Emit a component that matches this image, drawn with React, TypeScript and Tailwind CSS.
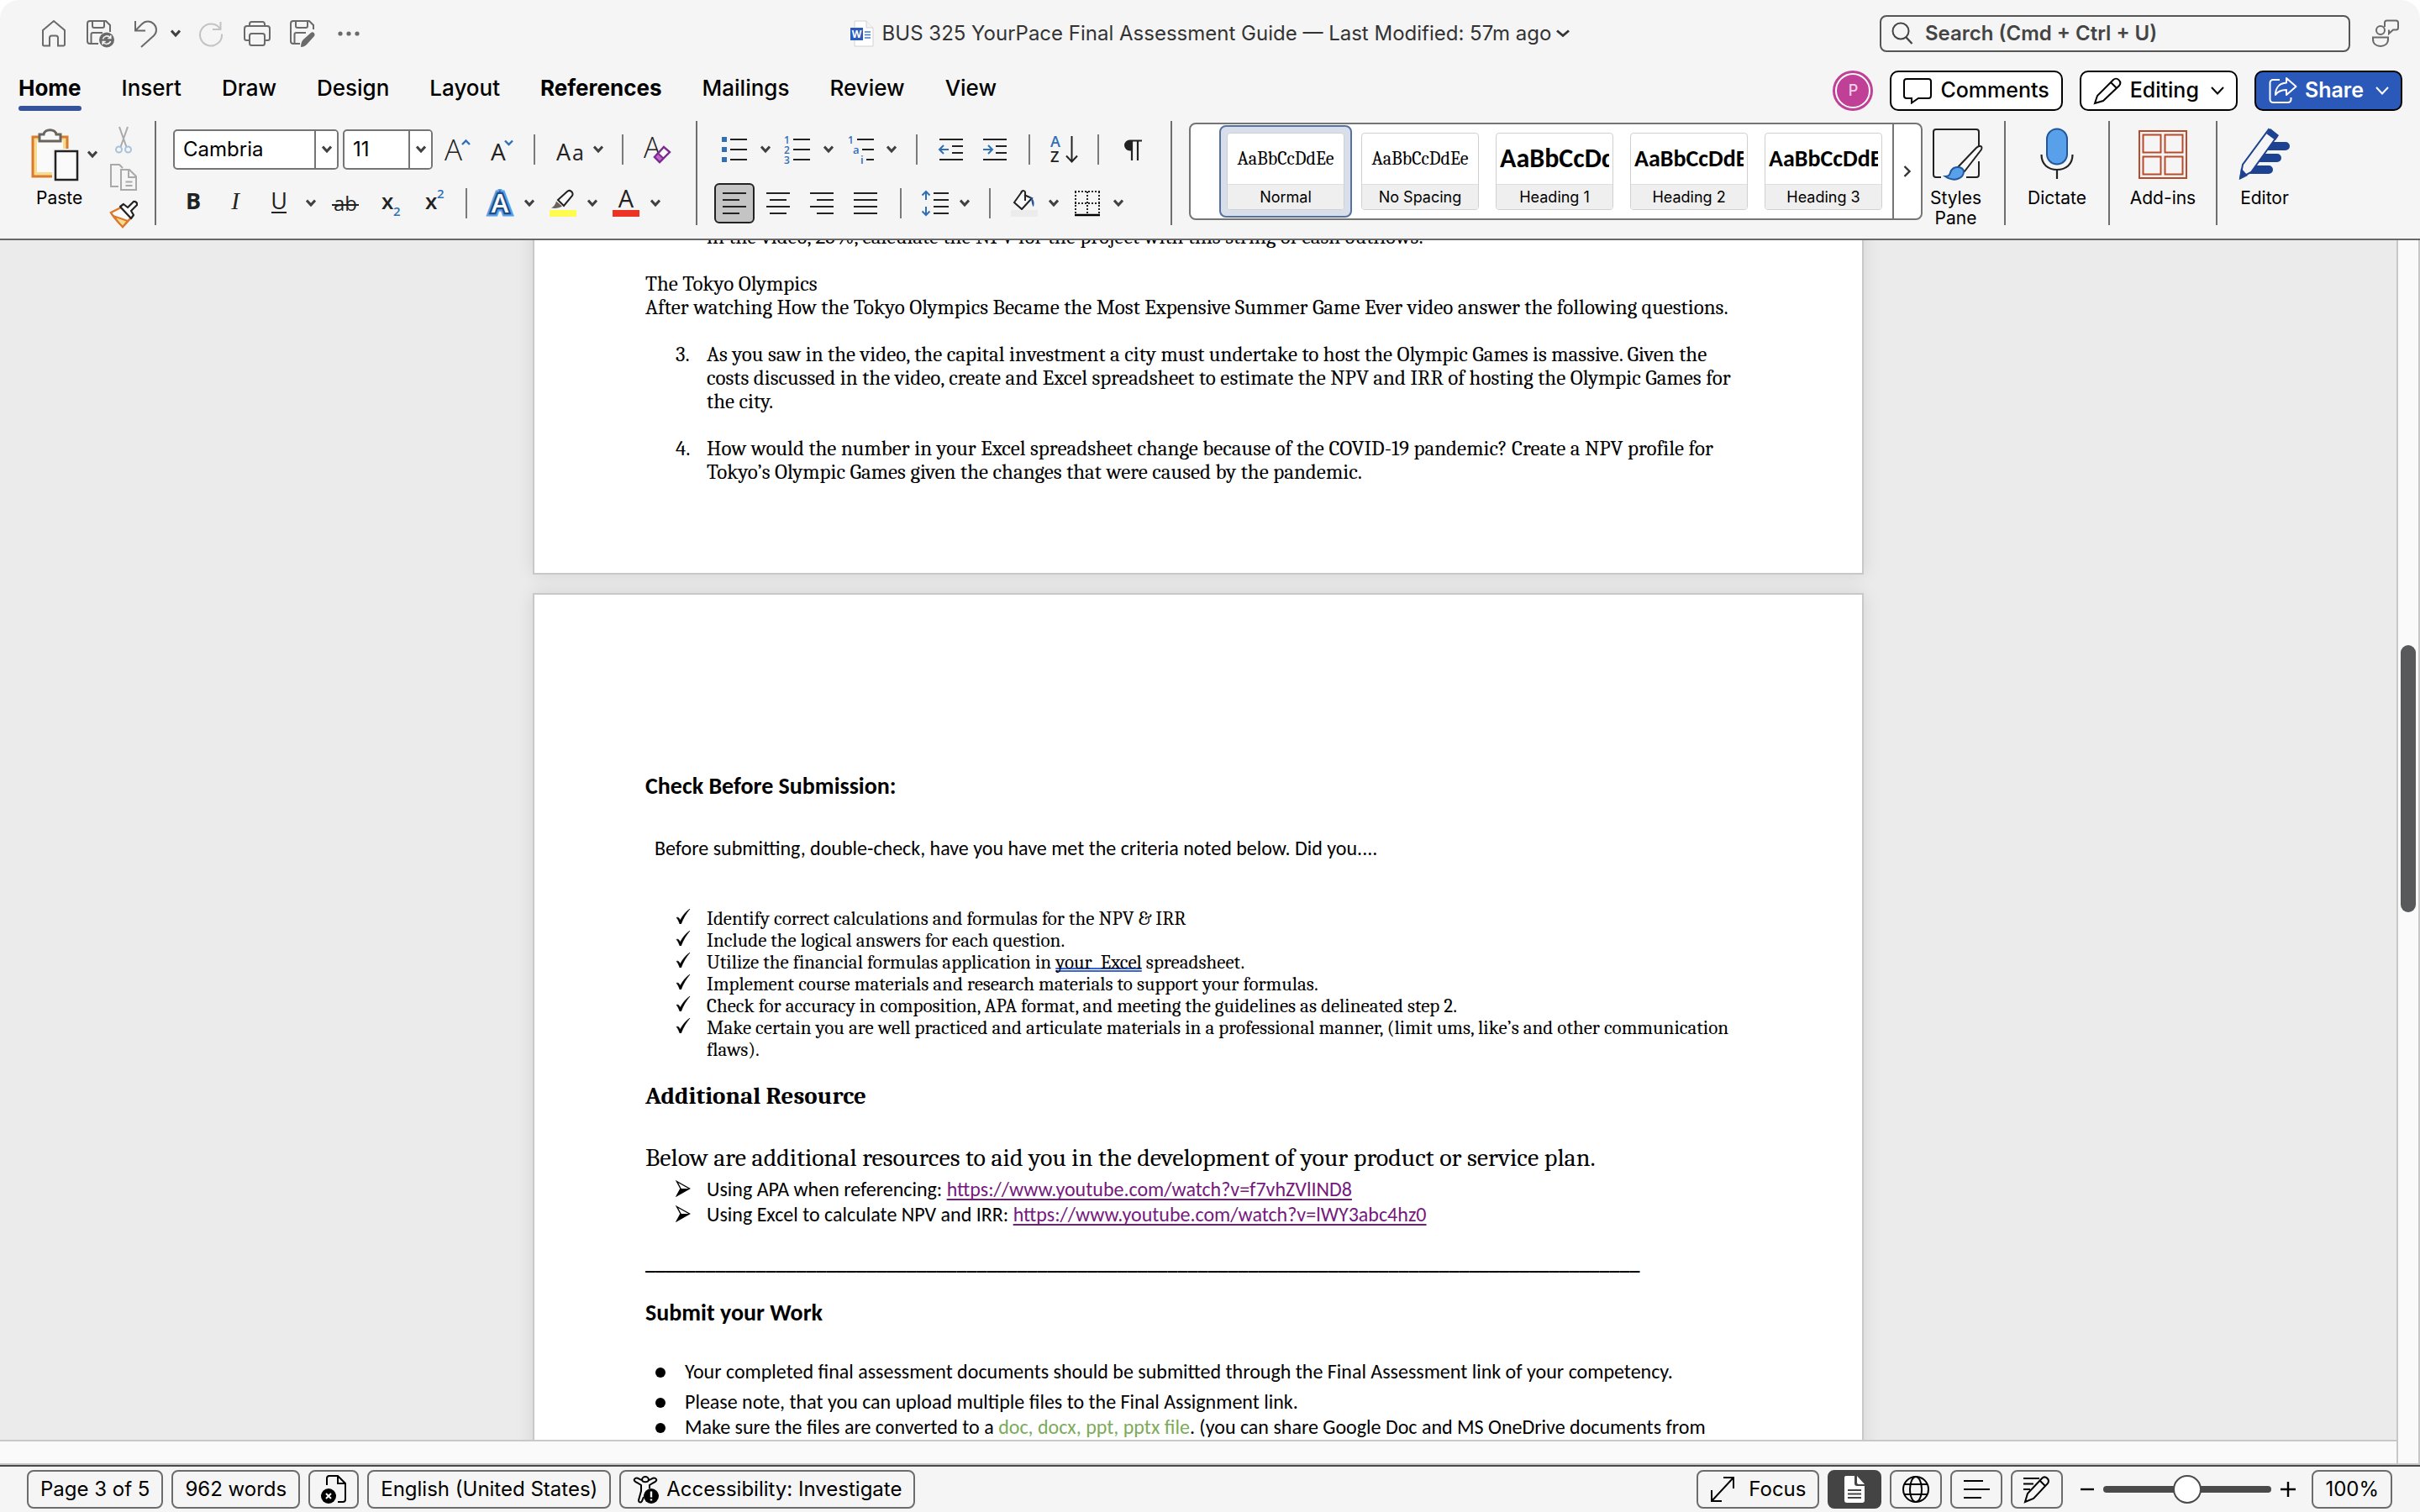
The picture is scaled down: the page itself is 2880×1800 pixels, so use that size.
import React from "react";

const ui = "font-['Inter','Liberation_Sans',sans-serif]";
const serif = "font-['Cambria','Caladea','Liberation_Serif',serif]";
const sans = "font-['Calibri','Carlito','Lato',sans-serif]";
const glyph = { fontFamily: "'Open Sans','Noto Sans',sans-serif" };

type BoxProps = { w: number; h: number; children: React.ReactNode; className?: string };

function Svg({ w, h, children, className = "" }: BoxProps) {
  return (
    <svg width={w} height={h} viewBox={`0 0 ${w} ${h}`} fill="none" aria-hidden="true" className={`shrink-0 ${className}`}>
      {children}
    </svg>
  );
}

function Chevron({ className = "" }: { className?: string }) {
  return (
    <Svg w={12} h={10} className={className}>
      <path d="M1 1.500 6 7l5-5.500" stroke="#404040" strokeWidth="3" />
    </Svg>
  );
}

function WideChevron({ color }: { color: string }) {
  return (
    <Svg w={16} h={10}>
      <path d="m1 1 7 7.5L15 1" stroke={color} strokeWidth="2" />
    </Svg>
  );
}

function Tool({ label, className = "", children }: { label: string; className?: string; children: React.ReactNode }) {
  return (
    <button type="button" aria-label={label} className={`flex shrink-0 items-center justify-center ${className}`}>
      {children}
    </button>
  );
}

function Drop({ label, className = "" }: { label: string; className?: string }) {
  return (
    <Tool label={label} className={className}>
      <Chevron />
    </Tool>
  );
}

function ShortRule({ className = "" }: { className?: string }) {
  return <span className={`h-9 w-[2px] shrink-0 bg-[#7a7a7a] ${className}`} />;
}

function TallRule({ className = "" }: { className?: string }) {
  return <span className={`w-[2px] shrink-0 self-stretch bg-[#6e6e6e] ${className}`} />;
}

/* Quick access toolbar */

function QuickAccess() {
  const s = { stroke: "#6a6a6a", strokeWidth: 2 };
  return (
    <div className="flex items-center pl-[49px]">
      <Tool label="Home">
        <Svg w={30} h={34}>
          <path d="M2 13 15 2l13 11v17a1.500 1.500 0 0 1-1.500 1.500H20V22a2.500 2.500 0 0 0-2.500-2.500h-5A2.500 2.500 0 0 0 10 22v9.500H3.500A1.500 1.500 0 0 1 2 30Z" {...s} />
        </Svg>
      </Tool>
      <Tool label="Save" className="ml-6">
        <Svg w={34} h={34}>
          <path d="M14 29H4a3 3 0 0 1-3-3V5a3 3 0 0 1 3-3h19l5 5v8M7 2v6a2 2 0 0 0 2 2h10a2 2 0 0 0 2-2V2M5.500 29V18a2 2 0 0 1 2-2H19" {...s} />
          <circle cx="24" cy="24.500" r="9" fill="#6a6a6a" />
          <path d="M19.500 23.500a5 5 0 0 1 8.500-2m.8-2.500v3.500h-3.500M28.600 26a5 5 0 0 1-8.600 1.600m-.8 2.400v-3.500h3.500" stroke="#f5f5f5" strokeWidth="1.600" />
        </Svg>
      </Tool>
      <Tool label="Undo" className="ml-[22px]">
        <Svg w={30} h={34}>
          <path d="M2 2v11.500h12M2.500 13 10 5.500a9.500 9.500 0 0 1 14 0c4 4 4 10 0 14L9 33" {...s} />
        </Svg>
      </Tool>
      <Drop label="Undo history" className="ml-[14px]" />
      <Tool label="Redo" className="ml-5">
        <Svg w={32} h={32}>
          <path d="M27.500 2v9H18M27 10.500A13 13 0 1 0 29 16.500" stroke="#c3c3c3" strokeWidth="2" />
        </Svg>
      </Tool>
      <Tool label="Print" className="ml-[22px]">
        <Svg w={34} h={32}>
          <path d="M8 7V4.500A2.500 2.500 0 0 1 10.500 2h13A2.500 2.500 0 0 1 26 4.500V7M8 24H4.500A2.500 2.500 0 0 1 2 21.500V10a3 3 0 0 1 3-3h24a3 3 0 0 1 3 3v11.500a2.500 2.500 0 0 1-2.500 2.500H26" {...s} />
          <rect x="8" y="16" width="18" height="14" rx="2.500" {...s} />
        </Svg>
      </Tool>
      <Tool label="Save a copy" className="ml-[22px]">
        <Svg w={34} h={34}>
          <path d="M12 29H4a3 3 0 0 1-3-3V5a3 3 0 0 1 3-3h19l5 5v5M7 2v6a2 2 0 0 0 2 2h10a2 2 0 0 0 2-2V2M5.500 29V18a2 2 0 0 1 2-2H19" {...s} />
          <path d="M13 33c0-4 1-7 3-9l9-8c2-2 6 1 4 4l-9 10c-2 2-4 3-7 3Z" fill="#6a6a6a" />
        </Svg>
      </Tool>
      <Tool label="More" className="ml-[22px]">
        <Svg w={28} h={8}>
          <circle cx="4" cy="4" r="2.600" fill="#6a6a6a" />
          <circle cx="14" cy="4" r="2.600" fill="#6a6a6a" />
          <circle cx="24" cy="4" r="2.600" fill="#6a6a6a" />
        </Svg>
      </Tool>
    </div>
  );
}

function TitleBar() {
  return (
    <div className="grid h-20 grid-cols-[1fr_auto_1fr] items-center">
      <QuickAccess />
      <button type="button" className="flex items-center text-2xl text-[#333]">
        <Svg w={28} h={34} className="mr-2.5">
          <path d="M5 2h14l8 8v22H5Z" fill="#fff" stroke="#d2d2d2" />
          <path d="M19 2v8h8" fill="#f3f3f3" stroke="#d2d2d2" />
          <path d="M17 15h7M17 18.500h7M17 22h7" stroke="#3f78cf" strokeWidth="1.500" />
          <rect y="10" width="15" height="15" fill="#2a5bbd" />
          <text x="7.500" y="22" textAnchor="middle" fontSize="12" fontWeight="700" fill="#fff" style={glyph}>W</text>
        </Svg>
        BUS 325 YourPace Final Assessment Guide — Last Modified: 57m ago
        <Svg w={16} h={10} className="ml-1.5">
          <path d="m1 1.500 7 6 7-6" stroke="#333" strokeWidth="2.800" />
        </Svg>
      </button>
      <div className="flex items-center justify-end pr-[23px]">
        <label className="flex h-11 w-[560px] items-center gap-3.5 rounded-lg border-2 border-[#555] px-3">
          <Svg w={26} h={28}>
            <circle cx="11" cy="11" r="9.500" stroke="#444" strokeWidth="2" />
            <path d="m17.500 18.500 7 7.500" stroke="#444" strokeWidth="2.400" />
          </Svg>
          <input
            type="text"
            aria-label="Search"
            placeholder="Search (Cmd + Ctrl + U)"
            className="min-w-0 flex-1 bg-transparent text-2xl font-semibold outline-none placeholder:text-[#444]"
          />
        </label>
        <Tool label="Share feedback" className="ml-6">
          <Svg w={36} h={34}>
            <circle cx="12" cy="13" r="5" stroke="#6a6a6a" strokeWidth="2" />
            <path d="M3 21.500h18v2C21 29 17 32 12 32s-9-3-9-8.500ZM17 9V4a2.500 2.500 0 0 1 2.500-2.500h11A2.500 2.500 0 0 1 33 4v6a2.500 2.500 0 0 1-2.500 2.500H27L22 17v-4.500" stroke="#6a6a6a" strokeWidth="2" />
          </Svg>
        </Tool>
      </div>
    </div>
  );
}

/* Tabs and collaboration buttons */

const tabs = ["Home", "Insert", "Draw", "Design", "Layout", "References", "Mailings", "Review", "View"];

function TabRow() {
  return (
    <div className="flex items-start justify-between pt-1">
      <nav className="flex gap-12 pl-[22px] text-[26px] leading-[42px] font-medium">
        {tabs.map((t) => (
          <button
            key={t}
            type="button"
            className={t === "Home" || t === "References" ? "flex flex-col font-bold" : "flex flex-col"}
          >
            {t}
            {t === "Home" && <span className="h-1.5 w-full rounded-full bg-[#34539a]" />}
          </button>
        ))}
      </nav>
      <div className="flex items-center gap-5 pr-[21px] text-[25px] font-medium">
        <button type="button" aria-label="Account" className="flex size-12 items-center justify-center rounded-full bg-[#c03f97] p-[3px]">
          <span className="flex size-full items-center justify-center rounded-full border-2 border-white text-lg text-[#f3cfe6]">P</span>
        </button>
        <button type="button" className="flex h-12 items-center gap-2.5 rounded-[10px] border-2 border-black bg-white px-3.5">
          <Svg w={34} h={32}>
            <path d="M4 2h26a3 3 0 0 1 3 3v17a3 3 0 0 1-3 3H18l-8 5.500V25H4a3 3 0 0 1-3-3V5a3 3 0 0 1 3-3Z" stroke="#000" strokeWidth="2" />
          </Svg>
          Comments
        </button>
        <button type="button" className="flex h-12 items-center rounded-[10px] border-2 border-black bg-white px-3.5">
          <Svg w={34} h={34} className="mr-2.5">
            <path d="m2 32 3-9L24 4c4-4 11 2 7 7L12 29l-10 3ZM21 7l7 7" stroke="#000" strokeWidth="2" />
          </Svg>
          <span className="mr-3.5">Editing</span>
          <WideChevron color="#000" />
        </button>
        <button type="button" className="flex h-12 items-center rounded-[10px] border-2 border-black bg-[#2b59b9] px-3.5 font-semibold text-white">
          <Svg w={36} h={34} className="mr-2">
            <path d="M14 4H6a3.500 3.500 0 0 0-3.500 3.500v20A3.500 3.500 0 0 0 6 31h18a3.500 3.500 0 0 0 3.500-3.500V25" stroke="#fff" strokeWidth="2" />
            <path d="m22 2 11.500 10L22 22v-6c-6 0-10 1.500-13 6 0-9 5-14 13-14.500Z" stroke="#fff" strokeWidth="2" strokeLinejoin="round" />
          </Svg>
          <span className="mr-3.5">Share</span>
          <WideChevron color="#fff" />
        </button>
      </div>
    </div>
  );
}

/* Ribbon groups */

function ClipboardGroup() {
  return (
    <div className="flex w-[184px] shrink-0">
      <button type="button" className="ml-[31px] flex flex-col items-center pt-2 text-[21px] leading-6">
        <Svg w={60} h={64} className="mb-2">
          <path d="M4 11h41v47H4Z" fill="#f7dc90" stroke="#dc7a2c" strokeWidth="3" />
          <rect x="9" y="15" width="31" height="38" fill="#fafafa" />
          <path d="M12 8h5c1-7 14-7 15 0h5v8H12Z" fill="#f8f8f8" stroke="#6a645c" strokeWidth="3" />
          <rect x="27" y="25" width="33" height="39" fill="#f5f5f5" />
          <rect x="31" y="28" width="26" height="34" fill="#fafafa" stroke="#222" strokeWidth="2.500" />
        </Svg>
        <span className="pl-3">Paste</span>
      </button>
      <Drop label="Paste options" className="ml-1.5 h-20" />
      <div className="ml-[14px] flex flex-col items-center gap-2.5 pt-1.5">
        <Tool label="Cut">
          <Svg w={34} h={34}>
            <path d="M12 1 20.500 25M22 1 13.500 25" stroke="#a9a9a9" strokeWidth="2" />
            <circle cx="11.500" cy="28" r="3.500" stroke="#a6c3de" strokeWidth="2" />
            <circle cx="22.500" cy="28" r="3.500" stroke="#a6c3de" strokeWidth="2" />
          </Svg>
        </Tool>
        <Tool label="Copy">
          <Svg w={34} h={34}>
            <path d="M11 28H2V2h10l4 4M14 8h10l8 8v16H14ZM23 8v9h9M19.500 22.500h8M19.500 27h8" stroke="#a9a9a9" strokeWidth="2" />
          </Svg>
        </Tool>
        <Tool label="Format painter">
          <Svg w={34} h={34}>
            <path d="M2 15 14 9l12 12-10 11C11 26 5 21 2 15Z" fill="#fafafa" stroke="#dc7a2c" strokeWidth="2.500" />
            <path d="M6 19.500 22 25l-6 7C12 28 8 24 6 19.500Z" fill="#f7dc90" stroke="#dc7a2c" strokeWidth="2" />
            <path d="m13 8 4-3 5 4 7-7c2-1 5 2 4 4l-7 7 3 5-3 4Z" fill="#fafafa" stroke="#222" strokeWidth="2.200" strokeLinejoin="round" />
          </Svg>
        </Tool>
      </div>
    </div>
  );
}

function Combo({ label, value, options, className }: { label: string; value: string; options: string[]; className: string }) {
  return (
    <div className={`relative flex h-12 shrink-0 overflow-hidden rounded-[5px] border-2 border-[#757575] bg-white ${className}`}>
      <select aria-label={label} defaultValue={value} className="w-full appearance-none pl-2.5 text-2xl outline-none">
        {options.map((o) => (
          <option key={o}>{o}</option>
        ))}
      </select>
      <span className="pointer-events-none absolute inset-y-0 right-0 flex w-[27px] items-center justify-center border-l-2 border-[#757575] bg-white">
        <Chevron />
      </span>
    </div>
  );
}

type LetterProps = {
  x: number;
  y: number;
  size: number;
  weight?: number;
  fill?: string;
  anchor?: "start" | "middle";
  children: string;
};

function Letter({ x, y, size, weight = 400, fill = "#222", anchor = "start", children }: LetterProps) {
  return (
    <text x={x} y={y} fontSize={size} fontWeight={weight} fill={fill} textAnchor={anchor} style={glyph}>
      {children}
    </text>
  );
}

function FontGroup() {
  return (
    <div className="flex w-[643px] shrink-0 flex-col pt-2.5 pl-5">
      <div className="flex h-12 items-center">
        <Combo label="Font" value="Cambria" options={["Cambria", "Calibri", "Arial"]} className="w-[197px]" />
        <Combo label="Font size" value="11" options={["10", "11", "12", "14"]} className="ml-[5px] w-[107px]" />
        <Tool label="Increase font size" className="ml-[13px]">
          <Svg w={34} h={34}>
            <Letter x={1} y={30} size={35} weight={300}>A</Letter>
            <path d="m22 11 4.500-4.500L31 11" stroke="#2f6fb5" strokeWidth="2.400" />
          </Svg>
        </Tool>
        <Tool label="Decrease font size" className="ml-[21px]">
          <Svg w={34} h={34}>
            <Letter x={1} y={30} size={28}>A</Letter>
            <path d="m18 6.500 4.500 4.500L27 6.500" stroke="#2f6fb5" strokeWidth="2.400" />
          </Svg>
        </Tool>
        <ShortRule className="ml-[18px]" />
        <Tool label="Change case" className="ml-[25px]">
          <Svg w={36} h={34}>
            <Letter x={0} y={30} size={27}>A</Letter>
            <Letter x={19} y={30} size={25}>a</Letter>
          </Svg>
        </Tool>
        <Drop label="Case options" className="ml-2" />
        <ShortRule className="ml-[22px]" />
        <Tool label="Clear formatting" className="ml-6">
          <Svg w={34} h={36}>
            <Letter x={0} y={28} size={34} weight={300}>A</Letter>
            <path d="m13 27 11-12 7 6-12 12Z" fill="#fafafa" stroke="#7c2b8e" strokeWidth="2.400" />
            <path d="m13 27 4-4.500 6.500 6L19 33Z" fill="#c165cf" stroke="#7c2b8e" strokeWidth="2" />
          </Svg>
        </Tool>
      </div>
      <div className="mt-4 flex h-12 items-center">
        <Tool label="Bold" className="ml-3">
          <Svg w={24} h={34}><Letter x={12} y={24} size={27} weight={700} anchor="middle">B</Letter></Svg>
        </Tool>
        <Tool label="Italic" className="ml-7">
          <Svg w={20} h={34}>
            <text x="10" y="24" textAnchor="middle" fontSize="29" fontStyle="italic" fill="#222" fontFamily="'Liberation Serif',serif">I</text>
          </Svg>
        </Tool>
        <Tool label="Underline" className="ml-7">
          <Svg w={28} h={34}>
            <Letter x={14} y={24} size={27} anchor="middle">U</Letter>
            <path d="M5 28h18" stroke="#222" strokeWidth="2" />
          </Svg>
        </Tool>
        <Drop label="Underline style" className="ml-[18px]" />
        <Tool label="Strikethrough" className="ml-[18px]">
          <Svg w={34} h={34}>
            <Letter x={17} y={26} size={24} anchor="middle">ab</Letter>
            <path d="M1 19h32" stroke="#222" strokeWidth="2" />
          </Svg>
        </Tool>
        <Tool label="Subscript" className="ml-[26px]">
          <Svg w={28} h={36}>
            <Letter x={0} y={25} size={26} weight={600}>x</Letter>
            <Letter x={14} y={33} size={15} weight={600} fill="#2f6fb5">2</Letter>
          </Svg>
        </Tool>
        <Tool label="Superscript" className="ml-6">
          <Svg w={28} h={36}>
            <Letter x={0} y={25} size={26} weight={600}>x</Letter>
            <Letter x={14} y={12} size={15} weight={600} fill="#2f6fb5">2</Letter>
          </Svg>
        </Tool>
        <ShortRule className="ml-5" />
        <Tool label="Text effects" className="ml-[22px]">
          <Svg w={34} h={34}>
            <text x="17" y="28" textAnchor="middle" fontSize="31" fontWeight="600" fill="#58a0ea" stroke="#58a0ea" strokeWidth="9" style={glyph}>A</text>
            <text x="17" y="28" textAnchor="middle" fontSize="31" fontWeight="600" fill="#fafafa" stroke="#1e4c86" strokeWidth="4.500" style={{ ...glyph, paintOrder: "stroke" }}>A</text>
          </Svg>
        </Tool>
        <Drop label="Text effect options" className="ml-3" />
        <Tool label="Highlight" className="ml-[17px]">
          <Svg w={34} h={34}>
            <path d="M3 22.500c3-1.500 5-4 6-8l7 6c-3 2-8 3-13 2Z" fill="#6a645c" />
            <path d="M11 13 22 3c3-3 8 1 6 5l-10 12Z" fill="#fafafa" stroke="#222" strokeWidth="2" />
            <rect x="1" y="25" width="32" height="8" fill="#fffb4f" />
          </Svg>
        </Tool>
        <Drop label="Highlight colour" className="ml-3" />
        <Tool label="Font colour" className="ml-[17px]">
          <Svg w={34} h={34}>
            <Letter x={17} y={22} size={29} anchor="middle">A</Letter>
            <rect x="1" y="25" width="32" height="8" fill="#ec3323" />
          </Svg>
        </Tool>
        <Drop label="Font colours" className="ml-3" />
      </div>
    </div>
  );
}

function Lines({ d }: { d: string }) {
  return <path d={d} stroke="#222" strokeWidth="2.200" />;
}

function ParagraphGroup() {
  const blue = { stroke: "#2f6fb5", strokeWidth: 2 };
  return (
    <div className="flex w-[563px] shrink-0 flex-col pt-2.5 pl-5">
      <div className="flex h-12 items-center">
        <Tool label="Bullets" className="ml-2">
          <Svg w={32} h={34}>
            <path d="M1 2h6v6H1ZM1 14h6v6H1ZM1 26h6v6H1Z" fill="#2f6fb5" />
            <Lines d="M11 5h20M11 17h20M11 29h20" />
          </Svg>
        </Tool>
        <Drop label="Bullet styles" className="ml-[15px]" />
        <Tool label="Numbering" className="ml-4">
          <Svg w={34} h={34}>
            <Letter x={0} y={10} size={12} weight={600} fill="#2f6fb5">1</Letter>
            <Letter x={0} y={22} size={12} weight={600} fill="#2f6fb5">2</Letter>
            <Letter x={0} y={34} size={12} weight={600} fill="#2f6fb5">3</Letter>
            <Lines d="M11 5h20M11 17h20M11 29h20" />
          </Svg>
        </Tool>
        <Drop label="Numbering styles" className="ml-[13px]" />
        <Tool label="Multilevel list" className="ml-[17px]">
          <Svg w={34} h={34}>
            <Letter x={0} y={10} size={12} weight={600} fill="#2f6fb5">1</Letter>
            <Letter x={6} y={22} size={13} weight={600} fill="#2f6fb5">a</Letter>
            <Letter x={15} y={34} size={13} weight={600} fill="#2f6fb5">i</Letter>
            <Lines d="M11 5h20M17 17h14M22 29h9" />
          </Svg>
        </Tool>
        <Drop label="Multilevel styles" className="ml-3" />
        <ShortRule className="ml-[23px]" />
        <Tool label="Decrease indent" className="ml-6">
          <Svg w={32} h={34}>
            <Lines d="M2 5h28M17 13h13M17 21h13M2 29h28" />
            <path d="M13 17H2m5-5-5 5 5 5" {...blue} />
          </Svg>
        </Tool>
        <Tool label="Increase indent" className="ml-5">
          <Svg w={32} h={34}>
            <Lines d="M2 5h28M17 13h13M17 21h13M2 29h28" />
            <path d="M2 17h11m-5-5 5 5-5 5" {...blue} />
          </Svg>
        </Tool>
        <ShortRule className="ml-6" />
        <Tool label="Sort" className="ml-6">
          <Svg w={34} h={36}>
            <Letter x={0} y={15} size={18} weight={600} fill="#2f6fb5">A</Letter>
            <Letter x={0} y={33} size={18} weight={600}>Z</Letter>
            <path d="M25.500 2v30m-6.500-6.500 6.500 7 6.500-7" stroke="#222" strokeWidth="2" />
          </Svg>
        </Tool>
        <ShortRule className="ml-[22px]" />
        <Tool label="Show paragraph marks" className="ml-7">
          <Svg w={24} h={34}>
            <path d="M2 12a6.500 6.500 0 0 1 6.500-6.500H23v2H11v11H8.500A6.500 6.500 0 0 1 2 12Z" fill="#222" />
            <path d="M11 6v24M18 6v24" stroke="#222" strokeWidth="2.200" />
          </Svg>
        </Tool>
      </div>
      <div className="mt-4 flex h-12 items-center">
        <Tool label="Align left" className="size-12 rounded-md border-2 border-[#222] bg-[#c4c4c4]">
          <Svg w={30} h={30}><Lines d="M1 3h28M1 11h20M1 19h28M1 27h20" /></Svg>
        </Tool>
        <Tool label="Align centre" className="ml-[13px]">
          <Svg w={30} h={30}><Lines d="M1 3h28M5 11h20M1 19h28M5 27h20" /></Svg>
        </Tool>
        <Tool label="Align right" className="ml-[22px]">
          <Svg w={30} h={30}><Lines d="M1 3h28M9 11h20M1 19h28M9 27h20" /></Svg>
        </Tool>
        <Tool label="Justify" className="ml-[22px]">
          <Svg w={30} h={30}><Lines d="M1 3h28M1 11h28M1 19h28M1 27h28" /></Svg>
        </Tool>
        <ShortRule className="ml-[26px]" />
        <Tool label="Line spacing" className="ml-[23px]">
          <Svg w={34} h={34}>
            <path d="M6 3v10M6 31V21M1.500 7.500 6 3l4.500 4.500M1.500 26.500 6 31l4.500-4.500" {...blue} />
            <Lines d="M15 5h18M15 13h18M15 21h18M15 29h18" />
          </Svg>
        </Tool>
        <Drop label="Line spacing options" className="ml-3" />
        <ShortRule className="ml-[23px]" />
        <Tool label="Shading" className="ml-[23px]">
          <Svg w={34} h={34}>
            <path d="M15 2 5 16l9 8 12-13-9-4M13 5c1-4 6-4 5 1v8" fill="#fafafa" stroke="#222" strokeWidth="2" />
            <path d="M22 8c5 2 8 7 6 13-2-1-2-6-3-9Z" fill="#20569b" />
            <rect x="1" y="25" width="32" height="8" fill="#ececec" />
          </Svg>
        </Tool>
        <Drop label="Shading colours" className="ml-3" />
        <Tool label="Borders" className="ml-[18px]">
          <Svg w={32} h={34}>
            <path d="M1 3h30M2 3v28M30 3v28M16 3v28M1 17h30" stroke="#222" strokeWidth="2" strokeDasharray="2 2" />
            <path d="M1 31h30" stroke="#000" strokeWidth="2.500" />
          </Svg>
        </Tool>
        <Drop label="Border options" className="ml-[15px]" />
      </div>
    </div>
  );
}

const styleTiles = [
  { name: "Normal", face: "font-['Cambria','Caladea',serif] text-[22px]" },
  { name: "No Spacing", face: "font-['Cambria','Caladea',serif] text-[22px]" },
  { name: "Heading 1", face: "font-['Calibri','Carlito',sans-serif] text-[32px] font-bold" },
  { name: "Heading 2", face: "font-['Calibri','Carlito',sans-serif] text-[28px] font-bold" },
  { name: "Heading 3", face: "font-['Calibri','Carlito',sans-serif] text-[28px] font-bold" },
];

function StyleGallery() {
  return (
    <div className="mt-0.5 ml-5 flex h-[116px] shrink-0 overflow-hidden rounded-lg border-2 border-[#757575] bg-white">
      <div className="flex items-center gap-0.5 pr-[3px] pl-[34px]">
        {styleTiles.map((t, i) => (
          <button
            key={t.name}
            type="button"
            aria-pressed={i === 0}
            className={
              i === 0
                ? "rounded-lg border-2 border-[#56719f] bg-[#d8dfea] p-[7px]"
                : "rounded-lg border-2 border-transparent p-[7px]"
            }
          >
            <span className="flex h-[92px] w-[140px] flex-col overflow-hidden rounded border border-[#d0d0d0] bg-white">
              <span className={`mx-1 flex flex-1 items-center overflow-hidden leading-9 ${t.face} ${i < 2 ? "justify-center" : ""}`}>
                AaBbCcDdEe
              </span>
              <span className="flex h-[30px] items-center justify-center border-t border-[#dedede] bg-[#efefef] text-[18px] leading-6">
                {t.name}
              </span>
            </span>
          </button>
        ))}
      </div>
      <button type="button" aria-label="More styles" className="flex w-[34px] items-center justify-center border-l-2 border-[#757575]">
        <Svg w={10} h={14}>
          <path d="m1.500 1 6 6-6 6" stroke="#333" strokeWidth="2.400" />
        </Svg>
      </button>
    </div>
  );
}

function BigTool({ icon, lines, className = "" }: { icon: React.ReactNode; lines: string[]; className?: string }) {
  return (
    <button type="button" className={`flex shrink-0 flex-col items-center pt-2 text-[21px] leading-6 ${className}`}>
      <span className="mb-2 flex h-16 items-center">{icon}</span>
      {lines.map((l) => (
        <span key={l}>{l}</span>
      ))}
    </button>
  );
}

function Ribbon() {
  return (
    <div className="flex h-[154px] items-start border-b-2 border-[#6a6768] pt-3 pb-4">
      <ClipboardGroup />
      <TallRule />
      <FontGroup />
      <TallRule className="-ml-px" />
      <ParagraphGroup />
      <TallRule />
      <StyleGallery />
      <BigTool
        className="w-[97px] pr-[18px]"
        lines={["Styles", "Pane"]}
        icon={
          <Svg w={64} h={64} className="ml-1">
            <path d="M12 59H6a3 3 0 0 1-3-3V5a3 3 0 0 1 3-3h48a3 3 0 0 1 3 3v19M57 40v16a3 3 0 0 1-3 3H42" stroke="#222" strokeWidth="2" />
            <path d="M32 47 54 24c3-3 8-3 6 2L40 52Z" fill="#fafafa" stroke="#222" strokeWidth="2" />
            <path d="M17 58c6 0 5-3 7-7 4-6 14-5 15 1 0 9-12 13-22 6Z" fill="#58a0ea" stroke="#20569b" strokeWidth="2" />
          </Svg>
        }
      />
      <TallRule />
      <BigTool
        className="w-[122px]"
        lines={["Dictate"]}
        icon={
          <Svg w={40} h={64}>
            <rect x="8" y="1.500" width="24" height="42" rx="12" fill="#58a0ea" stroke="#20569b" strokeWidth="2" />
            <path d="M1.500 32c0 12 8 18 18.500 18s18.500-6 18.500-18M20 50v11" stroke="#222" strokeWidth="2.200" />
          </Svg>
        }
      />
      <TallRule />
      <BigTool
        className="w-[126px]"
        lines={["Add-ins"]}
        icon={
          <Svg w={60} h={62}>
            <g stroke="#b94a2c" strokeWidth="2">
              <rect x="2" y="3" width="56" height="56" />
              <rect x="6.500" y="7.500" width="21" height="21" />
              <rect x="32.500" y="7.500" width="21" height="21" />
              <rect x="6.500" y="33.500" width="21" height="21" />
              <rect x="32.500" y="33.500" width="21" height="21" />
            </g>
          </Svg>
        }
      />
      <TallRule />
      <BigTool
        className="w-[112px]"
        lines={["Editor"]}
        icon={
          <Svg w={62} h={64}>
            <path d="M36 17h20a5 5 0 0 1 0 10H30ZM27 31h19a5 5 0 0 1 0 10H22ZM19 45h17a5 5 0 0 1 0 10H12Z" fill="#1d4291" />
            <path d="m2 60 3-16L36 2l10 8-31 43Z" fill="#f5f5f5" stroke="#1d4291" strokeWidth="2" />
            <path d="m33 7 5-6 10 8-4 6ZM1 62l2-14 8 9Z" fill="#1d4291" />
          </Svg>
        }
      />
    </div>
  );
}

/* Document */

function Check() {
  return (
    <Svg w={18} h={18} className="mt-px">
      <path d="M1 10.500c2-1 3 0 4.500 3C8.500 8 12 3.500 17 0 12.500 5.500 9 11 6.500 18H5C3.500 13.500 2.500 12 1 10.500Z" fill="#000" stroke="#000" strokeWidth=".6" />
    </Svg>
  );
}

function Arrow() {
  return (
    <Svg w={18} h={20} className="mt-1">
      <path d="M1.500 1.500 16.500 10 1.500 18.500 6 10Z" stroke="#000" strokeWidth="1.400" fill="#fff" />
      <path d="M6 10h10.500l-15 8.500Z" fill="#000" />
    </Svg>
  );
}

const checks: React.ReactNode[] = [
  "Identify correct calculations and formulas for the NPV & IRR",
  "Include the logical answers for each question.",
  <>
    Utilize the financial formulas application in{" "}
    <span className="whitespace-pre underline decoration-[#3a64cf] decoration-double decoration-2 [text-decoration-skip-ink:none] [text-underline-offset:-1px]">
      your  Excel
    </span>{" "}
    spreadsheet.
  </>,
  "Implement course materials and research materials to support your formulas.",
  "Check for accuracy in composition, APA format, and meeting the guidelines as delineated step 2.",
  "Make certain you are well practiced and articulate materials in a professional manner, (limit ums, like’s and other communication flaws).",
];

const links = [
  ["Using APA when referencing: ", "https://www.youtube.com/watch?v=f7vhZVlIND8"],
  ["Using Excel to calculate NPV and IRR: ", "https://www.youtube.com/watch?v=lWY3abc4hz0"],
];

function PageOne() {
  return (
    <section className={`-mt-[18px] w-[1584px] shrink-0 border-2 border-t-0 border-[#c8c8c8] bg-white pr-[144px] pb-[106px] pl-[132px] text-[25px] leading-7 shadow-[0_0_20px_rgba(0,0,0,0.1)] ${serif}`}>
      <p className="pl-[73px]">in the video, 25%, calculate the NPV for the project with this string of cash outflows.</p>
      <p className="mt-7">The Tokyo Olympics</p>
      <p>After watching How the Tokyo Olympics Became the Most Expensive Summer Game Ever video answer the following questions.</p>
      <ol start={3} className="mt-7 flex flex-col gap-7 pl-9">
        <li className="flex">
          <span className="w-[37px] shrink-0">3.</span>
          <span>
            As you saw in the video, the capital investment a city must undertake to host the Olympic Games is massive. Given the costs discussed in the video, create and Excel spreadsheet to estimate the NPV and IRR of hosting the Olympic Games for the city.
          </span>
        </li>
        <li className="flex">
          <span className="w-[37px] shrink-0">4.</span>
          <span>
            How would the number in your Excel spreadsheet change because of the COVID-19 pandemic? Create a NPV profile for Tokyo’s Olympic Games given the changes that were caused by the pandemic.
          </span>
        </li>
      </ol>
    </section>
  );
}

function PageTwo() {
  return (
    <section className={`mt-[22px] w-[1584px] shrink-0 border-2 border-[#c8c8c8] bg-white pt-[210px] pr-[144px] pb-40 pl-[132px] text-2xl leading-[30px] shadow-[0_0_20px_rgba(0,0,0,0.1)] ${sans}`}>
      <h2 className="text-[28px] leading-9 font-bold">Check Before Submission:</h2>
      <p className="mt-[41px] pl-[11px]">Before submitting, double-check, have you have met the criteria noted below. Did you....</p>
      <ul className={`mt-14 pl-9 text-[23px] leading-[26px] ${serif}`}>
        {checks.map((c, i) => (
          <li key={i} className="flex">
            <span className="w-[37px] shrink-0"><Check /></span>
            <span>{c}</span>
          </li>
        ))}
      </ul>
      <h2 className={`mt-6 text-[29px] leading-9 font-bold ${serif}`}>Additional Resource</h2>
      <p className={`mt-[38px] text-[30px] leading-9 ${serif}`}>
        Below are additional resources to aid you in the development of your product or service plan.
      </p>
      <ul className="mt-1 pl-9">
        {links.map(([text, url]) => (
          <li key={url} className="flex">
            <span className="w-[37px] shrink-0"><Arrow /></span>
            <span>
              {text}
              <a href={url} className="text-[#751a7c] underline decoration-2 underline-offset-[3px] [text-decoration-skip-ink:none]">
                {url}
              </a>
            </span>
          </li>
        ))}
      </ul>
      <p className="mt-7 font-bold whitespace-nowrap">{"_".repeat(99)}</p>
      <h2 className="mt-[26px] text-[28px] leading-9 font-bold">Submit your Work</h2>
      <ul className="mt-[37px] pl-3">
        <li className="mb-1.5 flex">
          <span className="mt-2.5 mr-[23px] size-3 shrink-0 rounded-full bg-black" />
          <span>Your completed final assessment documents should be submitted through the Final Assessment link of your competency.</span>
        </li>
        <li className="flex">
          <span className="mt-2.5 mr-[23px] size-3 shrink-0 rounded-full bg-black" />
          <span>Please note, that you can upload multiple files to the Final Assignment link.</span>
        </li>
        <li className="flex">
          <span className="mt-2.5 mr-[23px] size-3 shrink-0 rounded-full bg-black" />
          <span>
            Make sure the files are converted to a <span className="text-[#7cab59]">doc, docx, ppt, pptx file</span>. (you can share Google Doc and MS OneDrive documents from
          </span>
        </li>
      </ul>
    </section>
  );
}

/* Status bar */

function StatusButton({ label, className = "", children }: { label?: string; className?: string; children: React.ReactNode }) {
  return (
    <button type="button" aria-label={label} className={`flex h-[46px] shrink-0 items-center justify-center rounded-lg border-2 border-[#6c6c6c] whitespace-nowrap ${className}`}>
      {children}
    </button>
  );
}

function StatusBar() {
  return (
    <footer className="flex h-14 shrink-0 items-center justify-between border-t-2 border-[#4a4a4a] bg-[#f5f5f5] pr-[33px] pl-8 text-2xl">
      <div className="flex gap-2.5">
        <StatusButton className="px-3.5">Page 3 of 5</StatusButton>
        <StatusButton className="px-3.5">962 words</StatusButton>
        <StatusButton label="Proofing errors" className="w-[60px]">
          <Svg w={34} h={36}>
            <path d="M9 13V5a3 3 0 0 1 3-3h10l9 9v19a3 3 0 0 1-3 3h-6M22 2v9h9" stroke="#000" strokeWidth="2" />
            <circle cx="11" cy="26" r="9" fill="#000" />
            <path d="m8 23 6 6m0-6-6 6" stroke="#fff" strokeWidth="2" />
          </Svg>
        </StatusButton>
        <StatusButton className="px-3.5">English (United States)</StatusButton>
        <StatusButton className="gap-2 px-3.5">
          <Svg w={32} h={36}>
            <path d="M11 7a4 4 0 1 1 8 0M11 7C8 7 6 3 3 5s0 4 2 5l5 3v7L7 31c0 3 3 3 4 1l2-5M19 7c3 0 5-4 8-2s0 4-2 5l-5 3v4M11 7c1 3 7 3 8 0" stroke="#000" strokeWidth="2" />
            <circle cx="22" cy="26" r="9" fill="#000" />
            <path d="M22 20.500v7M22 29.500v2" stroke="#fff" strokeWidth="2.400" />
          </Svg>
          Accessibility: Investigate
        </StatusButton>
      </div>
      <div className="flex items-center gap-2.5">
        <StatusButton className="w-[146px] gap-4">
          <Svg w={30} h={32}>
            <path d="M2 30 28 2M16 2h12v13M2 17v13h12" stroke="#000" strokeWidth="2" />
          </Svg>
          Focus
        </StatusButton>
        <StatusButton label="Print layout" className="w-16 border-[#444] bg-[#444]">
          <Svg w={26} h={34}>
            <path d="M3 1h10v9a3 3 0 0 0 3 3h9v17a3 3 0 0 1-3 3H4a3 3 0 0 1-3-3V3a2 2 0 0 1 2-2ZM16 1l9 10h-7a2 2 0 0 1-2-2Z" fill="#fff" />
            <path d="M5 18h16M5 22.500h16M5 27h16" stroke="#444" strokeWidth="2" />
          </Svg>
        </StatusButton>
        <StatusButton label="Web layout" className="w-[62px]">
          <Svg w={34} h={34}>
            <circle cx="17" cy="17" r="15" stroke="#000" strokeWidth="2" />
            <ellipse cx="17" cy="17" rx="7" ry="15" stroke="#000" strokeWidth="2" />
            <path d="M3.500 11h27M3.500 23h27" stroke="#000" strokeWidth="2" />
          </Svg>
        </StatusButton>
        <StatusButton label="Outline" className="w-[62px]">
          <Svg w={34} h={26}>
            <path d="M2 3h23M2 13h31M2 23h21" stroke="#000" strokeWidth="2" />
          </Svg>
        </StatusButton>
        <StatusButton label="Draft" className="w-[62px]">
          <Svg w={34} h={34}>
            <path d="M1 4h19M1 10.500h12M1 17h8" stroke="#000" strokeWidth="2" />
            <path d="m3 32 3-10L23 4c4-4 10 1 7 6L13 28ZM21 7l6 6" stroke="#000" strokeWidth="2" />
          </Svg>
        </StatusButton>
        <Tool label="Zoom out" className="ml-2.5">
          <Svg w={18} h={20}><path d="M1 10h16" stroke="#000" strokeWidth="2.400" /></Svg>
        </Tool>
        <input
          type="range"
          min={0}
          max={100}
          defaultValue={50}
          aria-label="Zoom"
          className="h-9 w-[200px] appearance-none bg-transparent [&::-webkit-slider-runnable-track]:h-2 [&::-webkit-slider-runnable-track]:rounded-full [&::-webkit-slider-runnable-track]:bg-[#4a4a4a] [&::-webkit-slider-thumb]:-mt-[13px] [&::-webkit-slider-thumb]:size-[34px] [&::-webkit-slider-thumb]:appearance-none [&::-webkit-slider-thumb]:rounded-full [&::-webkit-slider-thumb]:border-2 [&::-webkit-slider-thumb]:border-solid [&::-webkit-slider-thumb]:border-[#4a4a4a] [&::-webkit-slider-thumb]:bg-white"
        />
        <Tool label="Zoom in">
          <Svg w={20} h={20}><path d="M1 10h18M10 1v18" stroke="#000" strokeWidth="2.400" /></Svg>
        </Tool>
        <StatusButton className="ml-2 px-3.5">100%</StatusButton>
      </div>
    </footer>
  );
}

export default function App() {
  return (
    <div className={`flex h-screen flex-col overflow-hidden bg-white text-black ${ui}`}>
      <header className="shrink-0 rounded-t-[22px] bg-[#f5f5f5]">
        <TitleBar />
        <TabRow />
        <Ribbon />
      </header>
      <main className="flex min-h-0 flex-1">
        <div className="flex min-w-0 flex-1 flex-col">
          <div className="flex min-h-0 flex-1 flex-col items-center overflow-hidden bg-[#ebebeb]">
            <PageOne />
            <PageTwo />
          </div>
          <div className="h-[30px] shrink-0 border-t-2 border-b-2 border-[#c8c8c8] bg-[#fafafa]" />
        </div>
        <div className="flex w-7 flex-col items-center border-r-2 border-b-2 border-l-2 border-[#c8c8c8] bg-[#fafafa]">
          <div className="grow-[482]" />
          <div className="w-[18px] grow-[318] rounded-full bg-[#58595b]" />
          <div className="grow-[656]" />
        </div>
      </main>
      <StatusBar />
    </div>
  );
}
